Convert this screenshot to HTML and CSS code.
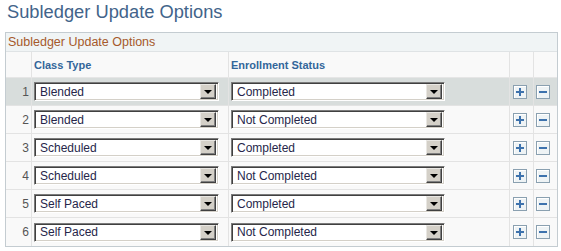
FILE: index.html
```html
<!DOCTYPE html>
<html lang="en">
<head>
    <meta charset="UTF-8">
    <title>Subledger Update Options</title>
    <link rel="stylesheet" href="styles.css">
</head>
<body>
    <h1 class="page-title">Subledger Update Options</h1>
    <div class="grid">
        <div class="grid-caption">Subledger Update Options</div>
        <div class="grid-row grid-head">
            <div class="cell c-num"></div>
            <div class="cell c-class">Class Type</div>
            <div class="cell c-status">Enrollment Status</div>
            <div class="cell c-add"></div>
            <div class="cell c-del"></div>
        </div>

        <div class="grid-row active">
            <div class="cell c-num">1</div>
            <div class="cell c-class"><div class="dropdown w-class"><span>Blended</span><i class="arrow"></i></div></div>
            <div class="cell c-status"><div class="dropdown w-status"><span>Completed</span><i class="arrow"></i></div></div>
            <div class="cell c-add"><button class="row-btn plus"><svg width="8" height="8" viewBox="0 0 8 8"><path d="M3 0h2v3h3v2h-3v3h-2v-3h-3v-2h3z"/></svg></button></div>
            <div class="cell c-del"><button class="row-btn minus"><svg width="8" height="2" viewBox="0 0 8 2"><path d="M0 0h8v2h-8z"/></svg></button></div>
        </div>
        <div class="grid-row">
            <div class="cell c-num">2</div>
            <div class="cell c-class"><div class="dropdown w-class"><span>Blended</span><i class="arrow"></i></div></div>
            <div class="cell c-status"><div class="dropdown w-status"><span>Not Completed</span><i class="arrow"></i></div></div>
            <div class="cell c-add"><button class="row-btn plus"><svg width="8" height="8" viewBox="0 0 8 8"><path d="M3 0h2v3h3v2h-3v3h-2v-3h-3v-2h3z"/></svg></button></div>
            <div class="cell c-del"><button class="row-btn minus"><svg width="8" height="2" viewBox="0 0 8 2"><path d="M0 0h8v2h-8z"/></svg></button></div>
        </div>
        <div class="grid-row">
            <div class="cell c-num">3</div>
            <div class="cell c-class"><div class="dropdown w-class"><span>Scheduled</span><i class="arrow"></i></div></div>
            <div class="cell c-status"><div class="dropdown w-status"><span>Completed</span><i class="arrow"></i></div></div>
            <div class="cell c-add"><button class="row-btn plus"><svg width="8" height="8" viewBox="0 0 8 8"><path d="M3 0h2v3h3v2h-3v3h-2v-3h-3v-2h3z"/></svg></button></div>
            <div class="cell c-del"><button class="row-btn minus"><svg width="8" height="2" viewBox="0 0 8 2"><path d="M0 0h8v2h-8z"/></svg></button></div>
        </div>
        <div class="grid-row">
            <div class="cell c-num">4</div>
            <div class="cell c-class"><div class="dropdown w-class"><span>Scheduled</span><i class="arrow"></i></div></div>
            <div class="cell c-status"><div class="dropdown w-status"><span>Not Completed</span><i class="arrow"></i></div></div>
            <div class="cell c-add"><button class="row-btn plus"><svg width="8" height="8" viewBox="0 0 8 8"><path d="M3 0h2v3h3v2h-3v3h-2v-3h-3v-2h3z"/></svg></button></div>
            <div class="cell c-del"><button class="row-btn minus"><svg width="8" height="2" viewBox="0 0 8 2"><path d="M0 0h8v2h-8z"/></svg></button></div>
        </div>
        <div class="grid-row">
            <div class="cell c-num">5</div>
            <div class="cell c-class"><div class="dropdown w-class"><span>Self Paced</span><i class="arrow"></i></div></div>
            <div class="cell c-status"><div class="dropdown w-status"><span>Completed</span><i class="arrow"></i></div></div>
            <div class="cell c-add"><button class="row-btn plus"><svg width="8" height="8" viewBox="0 0 8 8"><path d="M3 0h2v3h3v2h-3v3h-2v-3h-3v-2h3z"/></svg></button></div>
            <div class="cell c-del"><button class="row-btn minus"><svg width="8" height="2" viewBox="0 0 8 2"><path d="M0 0h8v2h-8z"/></svg></button></div>
        </div>
        <div class="grid-row">
            <div class="cell c-num">6</div>
            <div class="cell c-class"><div class="dropdown w-class"><span>Self Paced</span><i class="arrow"></i></div></div>
            <div class="cell c-status"><div class="dropdown w-status"><span>Not Completed</span><i class="arrow"></i></div></div>
            <div class="cell c-add"><button class="row-btn plus"><svg width="8" height="8" viewBox="0 0 8 8"><path d="M3 0h2v3h3v2h-3v3h-2v-3h-3v-2h3z"/></svg></button></div>
            <div class="cell c-del"><button class="row-btn minus"><svg width="8" height="2" viewBox="0 0 8 2"><path d="M0 0h8v2h-8z"/></svg></button></div>
        </div>
    </div>
</body>
</html>
```

FILE: styles.css
```css
body {
    margin: 0;
    padding: 0;
    background: #fff;
    font-family: "Liberation Sans", Arial, sans-serif;
}

.page-title {
    margin: 0;
    padding: 1px 0 0 7px;
    height: 32px;
    box-sizing: border-box;
    font-size: 18.3px;
    font-weight: normal;
    line-height: 21px;
    color: #42648a;
}

.grid {
    margin-left: 5px;
    width: 551px;
    border: 1px solid #c4ccd1;
}

.grid-caption {
    height: 19px;
    padding-left: 2px;
    background: #f0f4f5;
    border-bottom: 1px solid #dfe3e5;
    box-sizing: border-box;
    font-size: 12.5px;
    line-height: 18px;
    color: #a5592b;
}

.grid-row {
    display: flex;
    height: 28px;
    background: #f9f9f9;
    border-bottom: 1px solid #e3e3e3;
    box-sizing: border-box;
}

.grid-row:last-child {
    border-bottom: none;
}

.grid-row.active {
    background: #d8dddc;
}

.grid-head {
    height: 26px;
    border-bottom: 1px solid #e6e6e6;
}

.grid-head .cell {
    font-size: 11px;
    font-weight: bold;
    color: #33669a;
}

.cell {
    display: flex;
    align-items: center;
    box-sizing: border-box;
    border-right: 1px solid #e3e3e3;
    font-size: 12px;
}

.c-num {
    width: 26px;
    justify-content: flex-end;
    padding-right: 2px;
    color: #555;
}

.c-class {
    width: 197px;
    padding-left: 2px;
}

.c-status {
    width: 281px;
    padding-left: 2px;
}

.c-add {
    width: 24px;
    padding-left: 3px;
}

.c-del {
    width: 21px;
    padding-left: 2px;
    border-right: none;
}

.dropdown {
    display: flex;
    align-items: center;
    justify-content: space-between;
    height: 19px;
    box-sizing: border-box;
    background: #fff;
    border: 1px solid;
    border-color: #7b7b7b #fff #fff #7b7b7b;
    box-shadow: inset 1px 1px 0 #404040, inset -1px -1px 0 #d4d0c8;
    padding: 1px 2px 1px 5px;
    color: #26264a;
    font-size: 12px;
}

.w-class {
    width: 185px;
}

.w-status {
    width: 214px;
}

.arrow {
    position: relative;
    width: 16px;
    height: 15px;
    box-sizing: border-box;
    background: #d4d0c8;
    border: 1px solid;
    border-color: #e9e7e3 #404040 #404040 #e9e7e3;
    box-shadow: inset -1px -1px 0 #808080;
}

.arrow::after {
    content: "";
    position: absolute;
    left: 3px;
    top: 5px;
    border-left: 4px solid transparent;
    border-right: 4px solid transparent;
    border-top: 4px solid #000;
}

.row-btn {
    display: flex;
    align-items: center;
    justify-content: center;
    width: 14px;
    height: 14px;
    padding: 0;
    border: 1px solid #8aa0b0;
    background: #eef3f5;
    box-shadow: inset 1px 1px 0 #fff;
    cursor: pointer;
}

.row-btn svg {
    fill: #3d72ad;
}
```
